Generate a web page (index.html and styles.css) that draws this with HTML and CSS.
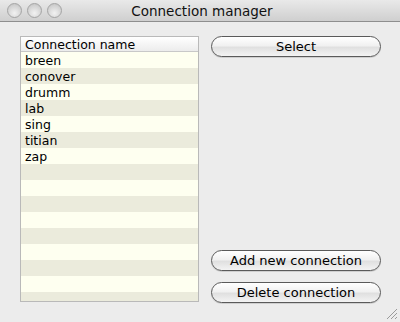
FILE: index.html
```html
<!DOCTYPE html>
<html lang="en">
<head>
  <meta charset="UTF-8" />
  <title>Connection manager</title>
  <link rel="stylesheet" href="styles.css">
</head>
<body>

<div class="window">
  <div class="titlebar">
    <div class="lights">
      <span class="light"></span>
      <span class="light"></span>
      <span class="light"></span>
    </div>
    <div class="title">Connection manager</div>
  </div>

  <div class="content">
    <div class="table">
      <div class="head">Connection name</div>
      <div class="row">breen</div>
      <div class="row">conover</div>
      <div class="row">drumm</div>
      <div class="row">lab</div>
      <div class="row">sing</div>
      <div class="row">titian</div>
      <div class="row">zap</div>
      <div class="row"></div>
      <div class="row"></div>
      <div class="row"></div>
      <div class="row"></div>
      <div class="row"></div>
      <div class="row"></div>
      <div class="row"></div>
      <div class="row"></div>
      <div class="row"></div>
    </div>

    <div class="actions">
      <button class="btn">Select</button>
      <div class="bottom-btns">
        <button class="btn">Add new connection</button>
        <button class="btn">Delete connection</button>
      </div>
    </div>
  </div>

  <!-- resize grip -->
  <svg class="grip" width="12" height="12" viewBox="0 0 12 12">
    <line x1="11" y1="1" x2="1" y2="11" stroke="#9a9a9a" />
    <line x1="11" y1="5" x2="5" y2="11" stroke="#9a9a9a" />
    <line x1="11" y1="9" x2="9" y2="11" stroke="#9a9a9a" />
  </svg>
</div>

</body>
</html>
```

FILE: styles.css
```css
body { margin: 0; background: #ececec; font-family: "DejaVu Sans", "Liberation Sans", sans-serif; }
.window { width: 400px; height: 322px; position: relative; overflow: hidden; background: #ececec; }

.titlebar { height: 21px; border-bottom: 1px solid #8e8e8e; background: linear-gradient(#e9e9e9, #cfcfcf); display: flex; align-items: center; position: relative; }
.lights { display: flex; gap: 5px; padding-left: 7px; }
.light { width: 13px; height: 13px; border-radius: 50%; border: 1px solid #a4a4a4; background: radial-gradient(circle at 50% 70%, #f2f2f2, #d4d4d4 60%, #bdbdbd); }
.title { flex: 1; text-align: center; font-size: 13.5px; color: #111; margin-right: 58px; margin-left: 0; }

.content { display: flex; gap: 12px; padding: 14px 0 0 20px; }

.table { width: 177px; height: 264px; border: 1px solid #b9b9b9; overflow: hidden; background: #fefff0; }
.head { height: 14px; line-height: 15px; padding-left: 4px; font-size: 12.5px; color: #000; border-bottom: 1px solid #c8c8c8; background: linear-gradient(#ffffff, #ececec); }
.row { height: 16px; line-height: 17px; padding-left: 4px; font-size: 12.5px; color: #000; background: #fefff0; }
.row:nth-child(odd) { background: #ebebdc; }

.actions { width: 170px; height: 267px; display: flex; flex-direction: column; justify-content: space-between; }
.bottom-btns { display: flex; flex-direction: column; gap: 11px; }
.btn { height: 21px; width: 170px; border: 1px solid #5a5a5a; border-radius: 11px; background: linear-gradient(#ffffff, #f1f1f1 45%, #e0e0e0 55%, #f3f3f3); font-family: "DejaVu Sans", "Liberation Sans", sans-serif; font-size: 13px; color: #000; padding: 0; box-shadow: 0 1px 0 #cfcfcf; }

.grip { position: absolute; right: 2px; bottom: 2px; }
```
